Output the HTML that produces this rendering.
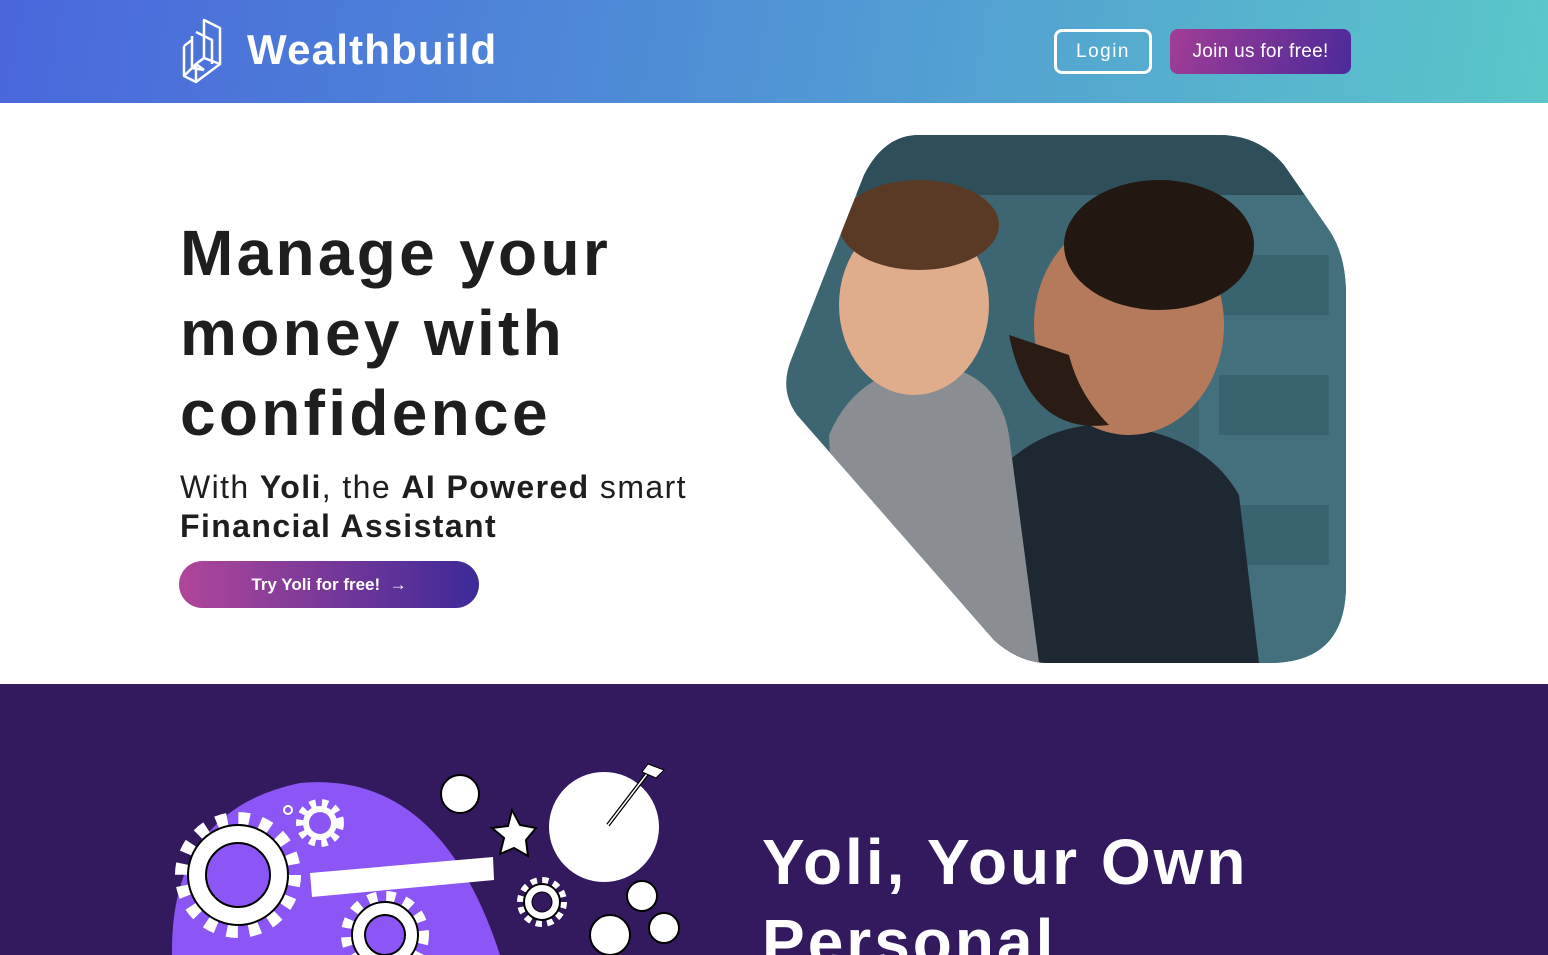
<!DOCTYPE html>
<html><head><meta charset="utf-8">
<style>
*{margin:0;padding:0;box-sizing:border-box}
body{width:1548px;height:955px;overflow:hidden;font-family:"Liberation Sans",sans-serif;background:#fff;position:relative}
.hdr{position:absolute;left:0;top:0;width:1548px;height:103px;background:linear-gradient(100deg,#4a67dc 0%,#4f8fd6 45%,#5bc7c9 100%)}
.logo{position:absolute;left:182px;top:18px}
.brand{position:absolute;left:247px;top:26px;color:#fff;font-weight:bold;font-size:42px;letter-spacing:1.2px}
.login{position:absolute;left:1054px;top:29px;width:98px;height:45px;border:3px solid #fff;border-radius:8px;color:#fff;font-size:19px;text-align:center;line-height:39px;letter-spacing:1.5px}
.join{position:absolute;left:1170px;top:29px;width:181px;height:45px;border-radius:8px;background:linear-gradient(110deg,#a23d96,#4b2a9a);color:#fff;font-size:19px;text-align:center;line-height:45px;letter-spacing:0.3px}
h1{position:absolute;left:180px;top:213px;font-size:64px;line-height:80px;color:#1e1e1e;font-weight:bold;letter-spacing:3.3px}
.sub{position:absolute;left:180px;top:468px;font-size:32px;line-height:39px;color:#1e1e1e;letter-spacing:1.4px}
.cta{position:absolute;left:179px;top:561px;width:300px;height:47px;border-radius:24px;background:linear-gradient(90deg,#b0469a,#3d2a98);color:#fff;font-weight:bold;font-size:17px;text-align:center;line-height:47px}
.sec{position:absolute;left:0;top:684px;width:1548px;height:271px;background:#331a5f;overflow:hidden}
.h2{position:absolute;left:762px;top:138px;color:#fff;font-weight:bold;font-size:64px;line-height:80px;letter-spacing:3px}
</style></head><body>
<div class="hdr">
<svg class="logo" width="42" height="66" viewBox="0 0 42 66" fill="none" stroke="#fff" stroke-width="2.5" stroke-linejoin="round">
<path d="M2 28 L2 58 L14 64 L38 46 L38 10 L22 2 L22 40 L14 46"/>
<path d="M10 18 L10 50 M2 28 L10 22 M14 14 L30 22 L30 46 M2 58 L14 46 L22 52 M14 64 L14 46 M22 40 L38 46 M10 50 L22 52"/>
</svg>
<div class="brand">Wealthbuild</div>
<div class="login">Login</div>
<div class="join">Join us for free!</div>
</div>
<h1>Manage your<br>money with<br>confidence</h1>
<div class="sub">With <b>Yoli</b>, the <b>AI Powered</b> smart<br><b>Financial Assistant</b></div>
<div class="cta">Try Yoli for free! &nbsp;→</div>
<svg style="position:absolute;left:779px;top:135px" width="568" height="528" viewBox="0 0 568 528">
<defs><clipPath id="c"><path d="M140 0 L440 0 Q480 0 505 30 L550 95 Q567 120 567 160 L567 450 Q567 528 490 528 L270 528 Q240 528 215 505 L18 280 Q0 255 12 225 L85 40 Q105 0 140 0 Z"/></clipPath></defs>
<g clip-path="url(#c)">
<rect width="568" height="528" fill="#3d6672"/>
<rect x="0" y="0" width="568" height="60" fill="#2e4f5a"/>
<rect x="420" y="60" width="148" height="468" fill="#44707d"/>
<rect x="440" y="120" width="110" height="60" fill="#3a6370"/><rect x="440" y="240" width="110" height="60" fill="#3a6370"/><rect x="440" y="370" width="110" height="60" fill="#3a6370"/>
<path d="M180 528 L190 380 Q230 300 310 290 Q420 290 460 360 L480 528 Z" fill="#1d2833"/>
<ellipse cx="350" cy="190" rx="95" ry="110" fill="#b57a5c"/>
<path d="M230 200 Q250 300 330 290 Q300 260 290 220 Z" fill="#2a1c15"/>
<ellipse cx="380" cy="110" rx="95" ry="65" fill="#221711"/>
<path d="M60 528 L50 300 Q80 230 160 230 Q220 240 230 300 L260 528 Z" fill="#8a8e93"/>
<ellipse cx="135" cy="170" rx="75" ry="90" fill="#e0ad8c"/>
<ellipse cx="140" cy="90" rx="80" ry="45" fill="#5a3a24"/>
</g>
</svg>
<div class="sec">
<svg style="position:absolute;left:160px;top:66px" width="540" height="205" viewBox="0 0 540 205">
<path d="M12 205 Q10 60 140 33 Q280 20 340 205 Z" fill="#8c55f5"/>
<g fill="none" stroke="#fff">
<circle cx="78" cy="125" r="56" stroke-width="14" stroke-dasharray="11 11"/>
<circle cx="225" cy="185" r="38" stroke-width="12" stroke-dasharray="9 9"/>
<circle cx="160" cy="73" r="20" stroke-width="8" stroke-dasharray="6 6"/>
<circle cx="382" cy="152" r="21" stroke-width="8" stroke-dasharray="6 5"/>
<circle cx="128" cy="60" r="4" stroke-width="2"/>
</g>
<g fill="#fff" stroke="#000" stroke-width="2">
<circle cx="78" cy="125" r="50"/><circle cx="225" cy="185" r="33"/><circle cx="160" cy="73" r="17" stroke="none"/>
<circle cx="300" cy="44" r="19"/><circle cx="444" cy="77" r="55" stroke="none"/><circle cx="382" cy="152" r="18"/>
<circle cx="482" cy="146" r="15"/><circle cx="504" cy="178" r="15"/><circle cx="450" cy="185" r="20"/>
</g>
<g fill="#8c55f5" stroke="#000" stroke-width="2"><circle cx="78" cy="125" r="32"/><circle cx="225" cy="185" r="20"/></g>
<circle cx="160" cy="73" r="11" fill="#8c55f5"/><circle cx="382" cy="152" r="10" fill="#331a5f" stroke="#000"/>
<path d="M150 123 L333 107 L334 130 L152 147 Z" fill="#fff"/>
<path d="M352 60 L360 75 L376 78 L366 90 L368 106 L354 98 L340 104 L344 88 L332 78 L348 76 Z" fill="#fff" stroke="#000" stroke-width="2"/>
<path d="M448 75 L490 20" stroke="#000" stroke-width="4"/><path d="M448 75 L490 20" stroke="#fff" stroke-width="1.5"/>
<path d="M488 14 L482 22 L496 28 L504 20 Z" fill="#fff" stroke="#000"/>
</svg>
<div class="h2">Yoli, Your Own<br>Personal</div>
</div>
</body></html>
